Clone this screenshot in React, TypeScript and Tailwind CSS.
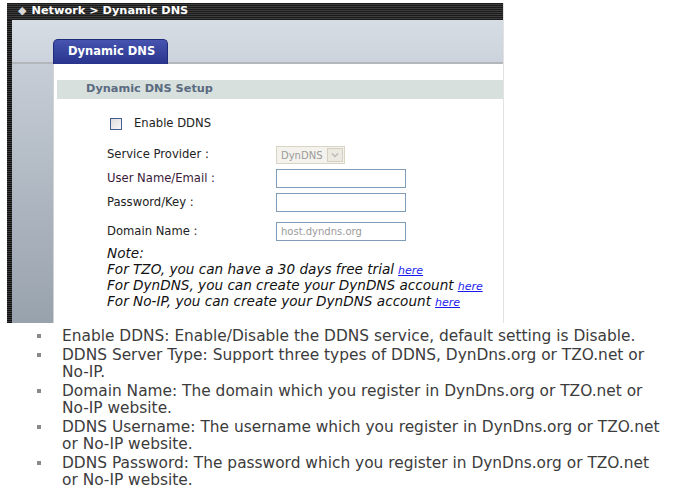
import React from 'react'

const verdana = { fontFamily: '"DejaVu Sans", Verdana, sans-serif' }

function TextInput({ value }: { value?: string }) {
  return (
    <div className="flex h-[19px] w-[130px] items-center border border-[#7f9db9] bg-white pl-[4px] text-[10px] text-[#9a9a9a]">
      {value}
    </div>
  )
}

function Link({ children }: { children: React.ReactNode }) {
  return <span className="text-[11px] leading-[16px] text-[#1a1aee] underline">{children}</span>
}

const bullets: string[][] = [
  ['Enable DDNS: Enable/Disable the DDNS service, default setting is Disable.'],
  ['DDNS Server Type: Support three types of DDNS, DynDns.org or TZO.net or', 'No-IP.'],
  ['Domain Name: The domain which you register in DynDns.org or TZO.net or', 'No-IP website.'],
  ['DDNS Username: The username which you register in DynDns.org or TZO.net', 'or No-IP website.'],
  ['DDNS Password: The password which you register in DynDns.org or TZO.net', 'or No-IP website.'],
]

const notes = [
  'For TZO, you can have a 30 days free trial',
  'For DynDNS, you can create your DynDNS account',
  'For No-IP, you can create your DynDNS account',
]

export default function App() {
  return (
    <div className="h-[500px] w-[685px] overflow-hidden bg-white" style={verdana}>
      {/* screenshot of the router page */}
      <div className="ml-[7px] pt-[3px]">
        <div className="w-[497px] border-r border-[#e2e2e2]">
          <div className="flex h-[17px] items-center bg-[repeating-linear-gradient(180deg,#1b1b1b_0px,#1b1b1b_1px,#3c3c3c_1px,#3c3c3c_2px)] pl-[11px] text-[11.3px] font-bold text-white">
            <span className="mr-[5px] text-[11px] text-[#d8d8d8]">◆</span>
            Network &gt; Dynamic DNS
          </div>
          <div className="flex">
            <div className="w-[5px] bg-[repeating-linear-gradient(180deg,#111_0px,#111_1px,#3a3a3a_1px,#3a3a3a_2px)]" />
            <div className="flex-1">
              <div className="flex h-[44px] items-end border-b-2 border-[#b3b7bc] bg-gradient-to-b from-[#d7dde4] to-[#cdd3dc] pl-[41px]">
                <div className="-mb-[2px] flex h-[25px] w-[115px] items-center rounded-t-[5px] border border-b-0 border-[#1f2a7a] bg-gradient-to-b from-[#4754b0] to-[#28348c] pl-[14px] text-[11.5px] font-bold text-white">
                  Dynamic DNS
                </div>
              </div>
              <div className="flex h-[259px]">
                <div className="w-[41px] bg-gradient-to-b from-[#c6cdd6] to-[#98a2ad]" />
                <div className="flex-1 border-l border-[#d3d3d3] bg-white pl-[3px] pt-[16px]">
                  <div className="flex h-[19px] items-center bg-[#d8e0dd] pl-[29px] text-[11.3px] font-bold text-[#5a6a80]">
                    Dynamic DNS Setup
                  </div>
                  <div className="pl-[50px] text-[11.6px] text-[#222]">
                    <div className="mt-[19px] flex h-[12px] items-center pl-[3px]">
                      <div className="h-[12px] w-[12px] border border-[#3f5f8f] bg-gradient-to-br from-[#dcdcdc] to-[#f8f8f8]" />
                      <span className="ml-[12px]">Enable DDNS</span>
                    </div>
                    <div className="mt-[16px] flex h-[18px] items-center">
                      <span className="w-[169px]">Service Provider :</span>
                      <div className="flex h-[18px] w-[69px] items-center border border-[#d9d4c4] bg-[#f4f2ec] pl-[4px] text-[10px] text-[#9a9a9a]">
                        DynDNS
                        <div className="ml-auto mr-[1px] flex h-[14px] w-[16px] items-center justify-center border border-[#d4d0c4] bg-[#ece9e0]">
                          <svg width="8" height="6" viewBox="0 0 8 6">
                            <path d="M1 1.5 L4 4.5 L7 1.5" fill="none" stroke="#b8b8b8" strokeWidth="1.4" />
                          </svg>
                        </div>
                      </div>
                    </div>
                    <div className="mt-[5px] flex items-center">
                      <span className="w-[169px] text-[#3a1a3a]">User Name/Email :</span>
                      <TextInput />
                    </div>
                    <div className="mt-[5px] flex items-center">
                      <span className="w-[169px]">Password/Key :</span>
                      <TextInput />
                    </div>
                    <div className="mt-[10px] flex items-center">
                      <span className="w-[169px]">Domain Name :</span>
                      <TextInput value="host.dyndns.org" />
                    </div>
                    <div className="mt-[4px] text-[13.6px] italic text-[#111]">
                      <div className="h-[16px] leading-[16px]">Note:</div>
                      {notes.map((n) => (
                        <div key={n} className="flex h-[16px] items-baseline gap-[4px] leading-[16px]">
                          <span>{n}</span>
                          <Link>here</Link>
                        </div>
                      ))}
                    </div>
                  </div>
                </div>
              </div>
            </div>
          </div>
        </div>
      </div>

      {/* explanation list */}
      <ul className="mt-[5px] flex flex-col gap-[2px] pl-[62px] text-[15.4px] leading-[17px] text-[#3c3c3c]">
        {bullets.map((lines, i) => (
          <li key={i} className="relative">
            <span className="absolute -left-[25px] top-[6px] h-[4px] w-[4px] bg-[#8a8a8a]" />
            {lines.map((l, j) => (
              <div key={j}>{l}</div>
            ))}
          </li>
        ))}
      </ul>
    </div>
  )
}
